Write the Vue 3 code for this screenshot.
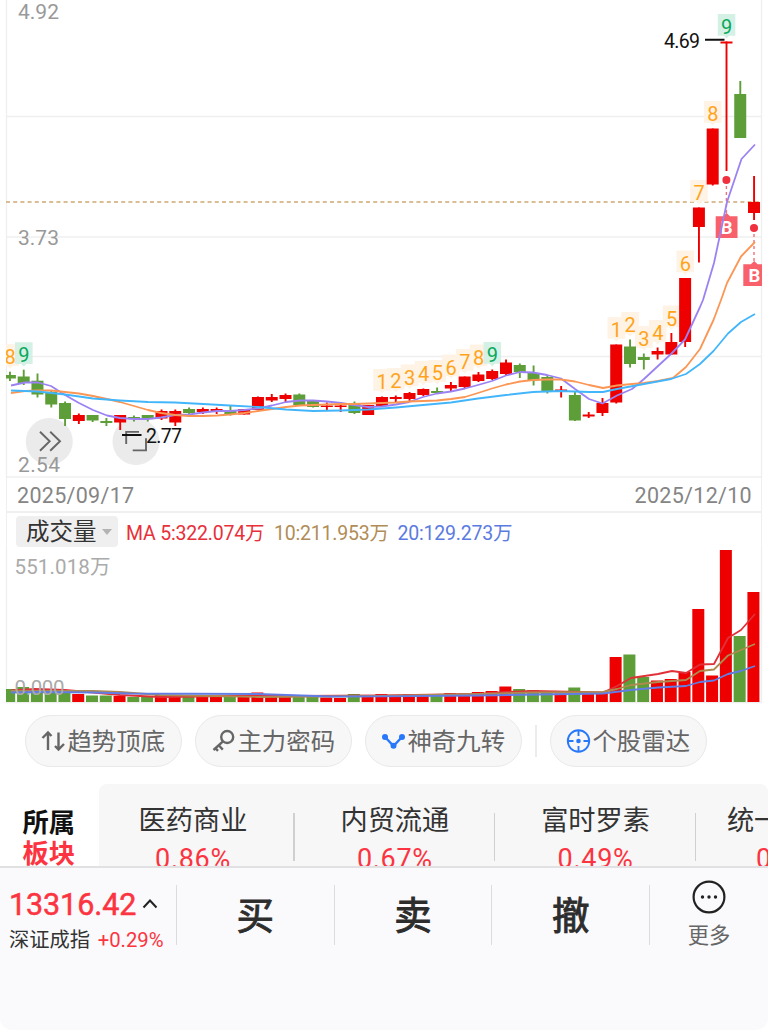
<script setup>
import { computed } from "vue"

const STEP = 13.78
const START = 9.9

// high, body top, body bottom, low, rising, volume top
const candles = [
  [371.7, 375, 378.5, 381, 0, 689],
  [369.7, 376.5, 383, 385, 0, 687],
  [373.5, 380.7, 394.5, 397.5, 0, 689],
  [391, 392, 404.5, 407.5, 0, 690],
  [401.5, 403, 419, 426, 0, 692],
  [413.5, 415, 421, 424, 1, 694],
  [415, 415, 420.5, 422, 0, 695.5],
  [418, 421, 423, 426, 0, 695.5],
  [415, 415, 422.5, 430, 1, 696],
  [415.5, 417, 419, 421.5, 0, 697],
  [415, 415, 419, 421.5, 0, 697],
  [409.5, 411, 418.5, 420, 1, 695],
  [409.5, 411, 422.5, 426, 1, 696],
  [407.5, 409, 413, 414, 0, 697],
  [407.5, 409, 412, 414, 1, 697],
  [407.5, 409, 411, 414, 1, 697],
  [405.5, 411, 414, 415.5, 0, 696],
  [409, 409, 414.5, 414.5, 1, 696],
  [396.5, 397, 410, 411, 1, 692.5],
  [394, 397, 400.5, 402, 1, 696],
  [393.5, 395, 399, 402, 1, 697],
  [393.5, 394.5, 405, 405, 0, 696],
  [401, 401, 407, 407.5, 0, 695.5],
  [402.5, 405.5, 407, 410, 1, 697.5],
  [404, 405.5, 407, 412, 1, 698],
  [401.5, 404, 413, 414, 0, 694],
  [405, 405, 415, 415, 1, 696],
  [396.5, 397, 406, 406, 1, 694],
  [395.5, 397, 399, 402, 1, 697],
  [392, 393, 399, 401, 1, 694],
  [388.5, 389, 395, 396, 1, 694],
  [387.5, 391, 393, 394, 0, 695],
  [382, 385, 388.5, 391, 1, 693],
  [376.5, 376.5, 387, 388, 1, 693.5],
  [372, 374.5, 381, 382, 1, 692],
  [369.5, 371, 379, 380, 1, 691],
  [359.5, 362.5, 374, 375, 1, 686.5],
  [363.5, 365, 372, 378, 0, 689],
  [365.5, 373, 380.5, 385.5, 0, 690],
  [376, 377, 391, 393.5, 0, 693],
  [386, 389.5, 392, 397.5, 1, 693.5],
  [391, 395, 420.5, 421, 0, 687.5],
  [412, 414.5, 416.5, 418, 1, 693.5],
  [398, 403, 413, 416, 1, 693],
  [344.5, 344.5, 402.5, 403.5, 1, 657],
  [339.5, 346.5, 364, 367.5, 0, 654.5],
  [353.5, 357, 360, 369.5, 0, 677],
  [347.5, 351, 354.5, 359.5, 1, 680.5],
  [333, 342, 354.5, 355, 1, 679],
  [278, 278, 342, 347, 1, 672],
  [207.5, 207.5, 227, 262.5, 1, 609],
  [128.5, 128.5, 184.5, 185.5, 1, 675.5],
  [41.5, 41.5, 43.5, 171, 1, 550],
  [81, 94, 138, 138, 0, 636],
  [176, 202, 213, 220, 1, 592],
]

const bars = computed(() => candles.map(([high, top, bottom, low, up, vol], i) => ({
  x: START + STEP * i, high, top, bottom, low, vol, color: up ? "#ee0000" : "#5d9e39",
})))

// Magic-nine counters: candle index -> number
const counts = [[0, 8], [1, 9]]
for (let n = 1; n <= 9; n++) {
  counts.push([26 + n, n], [43 + n, n])
}
const badges = counts
  .map(([i, n]) => ({ x: START + STEP * i, y: candles[i][0] - 27.5, n }))
  .sort((a, b) => a.n - b.n)

const priceLines = [
  { color: "#9b82f3", points: "11,385.5 18,384 25,382.5 38,382.5 51,386 65,395 79,403 93,410 107,415.5 120,418 134,419 148,419 161,417.5 175,415 189,414.5 203,412.5 217,411 230,411 244,410 258,408.5 272,405.5 286,402 300,400.5 313,400.5 327,401.5 341,403 354,405 368,407 382,406.5 396,404.5 409,402 423,397 437,393.5 451,391.5 465,388.5 478,385 492,381 506,375.5 520,372 533,372.5 547,375 561,378.5 575,389 589,399 602.5,403.5 617,395.5 632,389 644,379 658,366 671,354 685,339.5 700,307 703,300 714,263 727,202 741.5,159 755,144.5" },
  { color: "#fb9654", points: "11,393 25,391 38,390.5 51,390.5 65,392 79,393.5 93,396 107,399 120,402 134,406 148,410 161,413 175,415 189,416 203,416 217,415.5 230,414.5 244,413 258,411 272,409 286,407 300,405.5 313,405 327,404.5 341,404 354,404 368,403.5 382,403 396,402.5 409,401.5 423,401 437,400.5 451,399 465,397 478,393 492,388.5 506,384.5 520,381.5 533,380 547,379.5 561,379.5 575,381.5 589,385 603,388 617,385.5 632,384 644,383 658,381 673,378 686,367 700,349 713.5,320 721,300 727,283 741,256.5 755,242" },
  { color: "#43b6fb", points: "11,390.5 38,391.5 65,394.5 93,398.5 120,400.5 148,402 175,402.5 203,404 230,405.5 258,407 286,409.5 313,411 341,410.5 368,409.5 396,407.5 423,405 451,402.5 478,398.5 506,395 533,392 561,391 589,392 603,392 617,389 644,384 671,379 686,374 700,364 713.5,351 728,333.5 741,322 755,314" },
]

const volumeLines = [
  { color: "#e03138", points: "11,690.5 35,689 65,690 93,692.5 120,695 160,697 200,696.5 258,695.5 300,696 382,695.5 478,694 506,692 533,691 603,692.5 617,686 631,678 658,674 672,671 686,673 700,664.5 714,664 728,638 741,630 755,614" },
  { color: "#ae8a50", points: "11,691 93,691 120,692 160,695 258,697 382,696 478,694 533,692.5 603,692 617,689 631,685 658,682 686,680 700,671 714,669.5 728,655.5 755,644" },
  { color: "#617ee6", points: "11,692.5 38,692 93,692.5 130,693.5 258,694 330,696.5 382,696.3 478,695.5 603,693.5 631,690 658,687.5 686,686 700,682 714,680.5 728,674 741,671 755,666" },
]

const signals = [
  { x: 726.4, y: 180 },
  { x: 754, y: 228 },
]

const sectors = [
  { name: "医药商业", change: "0.86%" },
  { name: "内贸流通", change: "0.67%" },
  { name: "富时罗素", change: "0.49%" },
]

const actions = ["买", "卖", "撤"]
</script>

<template>
  <div class="page">
    <!-- Price chart -->
    <svg
      class="price-chart"
      viewBox="0 0 768 478"
    >
      <defs>
        <clipPath id="plot">
          <rect
            x="6"
            y="0"
            width="756"
            height="478"
          />
        </clipPath>
      </defs>
      <g class="grid">
        <path d="M6 116.5H762M6 237H762M6 356.5H762M6 477H762M6.5 0V478M761.5 0V478" />
      </g>
      <g class="float-btn">
        <circle cx="49.3" cy="441.5" r="23.5" />
        <circle cx="136" cy="441.5" r="23.5" />
        <path d="M40 431.7L49.7 441.2L40 450.7M50.2 431.7L60 441.2L50.2 450.7M126.2 444V431.9H139M132.7 450.4H146V438.3" />
      </g>
      <g class="axis">
        <text x="18" y="19" textLength="41">4.92</text>
        <text x="18" y="245" textLength="41">3.73</text>
        <text x="18" y="471.5" textLength="42">2.54</text>
      </g>
      <path
        class="last-price"
        d="M6 202H762"
      />
      <g clip-path="url(#plot)">
        <g
          v-for="b in badges"
          :key="'t' + b.x"
          :class="b.n === 9 ? 'badge nine' : 'badge'"
        >
          <path :d="`M${b.x - 8.7} ${b.y}h17.6v21.8h-6.2l-2.6 2.6l-2.6 -2.6h-6.2z`" />
        </g>
        <g
          v-for="bar in bars"
          :key="bar.x"
          :fill="bar.color"
        >
          <rect
            :x="bar.x - 0.9"
            :y="bar.high"
            width="1.9"
            :height="bar.low - bar.high"
          />
          <rect
            :x="bar.x - 6"
            :y="bar.top"
            width="12"
            :height="bar.bottom - bar.top"
          />
        </g>
        <g
          v-for="s in signals"
          :key="s.x"
          class="signal"
        >
          <circle
            :cx="s.x"
            :cy="s.y"
            r="4"
          />
          <path
            class="stem"
            :d="`M${s.x} ${s.y + 6}v29`"
          />
          <path
            class="flag"
            :d="`M${s.x - 10.7} ${s.y + 36.3}h7.5l3.4 -3.4l3.4 3.4h7.5v21.6h-21.8z`"
          />
          <text
            :x="s.x + 0.3"
            :y="s.y + 53.8"
          >B</text>
        </g>
        <polyline
          v-for="line in priceLines"
          :key="line.color"
          class="ma"
          :points="line.points"
          :stroke="line.color"
        />
        <text
          v-for="b in badges"
          :key="'n' + b.x"
          :class="b.n === 9 ? 'count green' : 'count'"
          :x="b.x + 0.2"
          :y="b.y + 20.2"
        >{{ b.n }}</text>
      </g>
      <g class="extreme">
        <path d="M705 39.8H724.5M122 435H141.5" />
        <text x="664" y="47.5" textLength="36">4.69</text>
        <text x="146" y="442.5" textLength="36">2.77</text>
      </g>
    </svg>

    <div class="dates">
      <span>2025/09/17</span>
      <span>2025/12/10</span>
    </div>

    <!-- Volume indicator -->
    <div class="volume-head">
      <div class="picker">
        成交量<i class="caret" />
      </div>
      <span class="ma5">MA 5:322.074万</span>
      <span class="ma10">10:211.953万</span>
      <span class="ma20">20:129.273万</span>
    </div>
    <svg
      class="volume-chart"
      viewBox="0 548 768 156"
    >
      <g class="grid">
        <path d="M6.5 548V703M761.5 548V703M6 702.7H762" />
      </g>
      <text
        class="vol-label"
        x="14.5"
        y="574"
        textLength="96"
      >551.018万</text>
      <rect
        v-for="(bar, i) in bars"
        :key="bar.x"
        :x="i ? bar.x - 6.6 : 6"
        :y="bar.vol"
        :width="i ? 12 : 9.2"
        :height="702 - bar.vol"
        :fill="bar.color"
      />
      <polyline
        v-for="line in volumeLines"
        :key="line.color"
        class="ma"
        :points="line.points"
        :stroke="line.color"
      />
      <text
        class="vol-label"
        x="14.5"
        y="695"
        textLength="50"
      >0.000</text>
    </svg>

    <!-- Indicator shortcuts -->
    <div class="chips">
      <div class="chip">
        <svg
          width="25"
          height="24"
          viewBox="0 0 25 24"
        >
          <path d="M7 21V3.5M1.5 9L7 3.5L10.5 7M17.5 3.5V20.5M14 17L17.5 20.5L23 15" />
        </svg><span>趋势顶底</span>
      </div>
      <div class="chip">
        <svg
          width="25"
          height="24"
          viewBox="0 0 25 24"
        >
          <circle
            cx="16.2"
            cy="8"
            r="6"
          />
          <path d="M12 12.3L2.5 21M7.7 16.2L11.8 20.6M4.4 19.1L7 21.8" />
        </svg><span>主力密码</span>
      </div>
      <div class="chip blue">
        <svg
          width="25"
          height="24"
          viewBox="0 0 25 24"
        >
          <path d="M4 8L12.5 17L21 8" />
          <g class="dots">
            <circle
              cx="4"
              cy="8"
              r="3"
            />
            <circle
              cx="12.5"
              cy="16.7"
              r="3"
            />
            <circle
              cx="21"
              cy="8"
              r="3"
            />
          </g>
        </svg><span>神奇九转</span>
      </div>
      <i class="sep" />
      <div class="chip blue">
        <svg
          class="thin"
          width="25"
          height="24"
          viewBox="0 0 25 24"
        >
          <circle
            cx="12.5"
            cy="12"
            r="10.7"
          />
          <path d="M12.5 1.5V7M12.5 17V22.5M2 12H7.5M17.5 12H23" />
          <g class="dots">
            <circle
              cx="12.5"
              cy="12"
              r="2.3"
            />
          </g>
        </svg><span>个股雷达</span>
      </div>
    </div>

    <!-- Related sectors -->
    <div class="sectors">
      <div class="sector-title">
        <span>所属</span>
        <span class="red">板块</span>
      </div>
      <div class="sector-list">
        <div
          v-for="s in sectors"
          :key="s.name"
          class="sector"
        >
          <span class="name">{{ s.name }}</span>
          <span class="change">{{ s.change }}</span>
        </div>
        <div class="sector last">
          <span class="name">统一</span>
          <span class="change">0</span>
        </div>
      </div>
    </div>

    <!-- Trade bar -->
    <div class="trade-bar">
      <div class="index">
        <div class="index-value">
          13316.42
          <svg
            width="16"
            height="12"
            viewBox="0 0 16 12"
          >
            <path d="M1.5 8.5L8 1.5L14.5 8.5" />
          </svg>
        </div>
        <div class="index-name">
          深证成指<span>+0.29%</span>
        </div>
      </div>
      <div
        v-for="a in actions"
        :key="a"
        class="action"
      >
        {{ a }}
      </div>
      <div class="more">
        <svg
          width="36"
          height="36"
          viewBox="0 0 36 36"
        >
          <circle
            class="ring"
            cx="18"
            cy="18"
            r="15.4"
          />
          <circle cx="11.5" cy="18" r="1.7" />
          <circle cx="18" cy="18" r="1.7" />
          <circle cx="24.5" cy="18" r="1.7" />
        </svg>
        更多
      </div>
    </div>
  </div>
</template>

<style>
body {
  margin: 0;
  background: #fff;
}
</style>

<style scoped>
.page {
  width: 768px;
  height: 1030px;
  display: flex;
  flex-direction: column;
  overflow: hidden;
  background: #fff;
  font-family: Roboto, "Noto Sans CJK SC", sans-serif;
}

.price-chart,
.volume-chart {
  display: block;
  width: 768px;
  flex: none;
}

.price-chart {
  height: 478px;
}

.volume-chart {
  height: 156px;
}

.grid path {
  fill: none;
  stroke: #efefef;
  stroke-width: 1.3;
}

.axis text {
  font-size: 21px;
  fill: #999;
}

.float-btn circle {
  fill: #ebebeb;
}

.float-btn path {
  fill: none;
  stroke: #666;
  stroke-width: 1.9;
}

.last-price {
  stroke: #cda873;
  stroke-width: 1.6;
  stroke-dasharray: 4 3.2;
}

.badge path {
  fill: #fff3e5;
}

.badge.nine path {
  fill: #d5f1e5;
}

.count {
  font-size: 20px;
  fill: #ffa31a;
  text-anchor: middle;
}

.count.green {
  fill: #09a85d;
}

.signal circle {
  fill: #f0303e;
}

.stem {
  stroke: #f2707a;
  stroke-width: 1.4;
  stroke-dasharray: 3 3;
}

.flag {
  fill: #f8606b;
}

.signal text {
  font-size: 18.5px;
  font-weight: 700;
  fill: #fff;
  text-anchor: middle;
}

.ma {
  fill: none;
  stroke-width: 1.8;
  stroke-linejoin: round;
}

.extreme path {
  stroke: #111;
  stroke-width: 1.9;
}

.extreme text {
  font-size: 19.5px;
  fill: #111;
}

.dates {
  flex: none;
  box-sizing: border-box;
  height: 35px;
  margin: 0 6px;
  padding: 2px 9px 0 10px;
  display: flex;
  justify-content: space-between;
  align-items: center;
  border: solid #efefef;
  border-width: 0 1px 2px;
  font-size: 21.5px;
  letter-spacing: 0.3px;
  color: #858585;
}

.volume-head {
  flex: none;
  box-sizing: border-box;
  height: 35px;
  margin: 0 6px;
  padding: 3px 0 0 9px;
  display: flex;
  align-items: flex-start;
  border: solid #efefef;
  border-width: 0 1px;
  font-size: 19.5px;
  line-height: 36px;
  letter-spacing: -0.2px;
  white-space: nowrap;
}

.picker {
  box-sizing: border-box;
  width: 102px;
  height: 31px;
  padding-left: 10px;
  margin-right: 8px;
  display: flex;
  align-items: center;
  gap: 5px;
  border-radius: 4px;
  background: #efefef;
  font-size: 23.5px;
  letter-spacing: 0;
  line-height: 30px;
  color: #333;
}

.caret {
  border: 5px solid transparent;
  border-top: 6px solid #b3b3b3;
  border-bottom: 0;
}

.ma5 {
  width: 148px;
  color: #e8303a;
}

.ma10 {
  width: 123.5px;
  color: #b08d57;
}

.ma20 {
  color: #5c7be0;
}

.vol-label {
  font-size: 20.5px;
  fill: #aaa;
}

.chips {
  flex: none;
  height: 52px;
  margin: 11px 0 0 24.5px;
  display: flex;
  align-items: center;
  gap: 12.5px;
}

.chip {
  box-sizing: border-box;
  width: 157.5px;
  height: 52px;
  display: flex;
  align-items: center;
  justify-content: center;
  gap: 1px;
  border: 1.5px solid #e9e9e9;
  border-radius: 26px;
  background: #f7f7f7;
  font-size: 24.4px;
  color: #666;
  white-space: nowrap;
}

.chip span {
  padding-bottom: 3px;
}

.chip svg {
  flex: none;
  fill: none;
  stroke: #666;
  stroke-width: 2.4;
}

.chip.blue svg {
  stroke: #2878fa;
}

.chip svg.thin {
  stroke-width: 1.9;
}

.chip .dots {
  fill: #2878fa;
  stroke: none;
}

.sep {
  width: 1.5px;
  height: 32px;
  margin: 0 0.5px;
  background: #ececec;
}

.sectors {
  flex: none;
  height: 82px;
  margin-top: 17px;
  display: flex;
  overflow: hidden;
}

.sector-title {
  box-sizing: border-box;
  width: 98.5px;
  flex: none;
  padding: 23.5px 0 0 22.5px;
  display: flex;
  flex-direction: column;
  font-size: 26.3px;
  font-weight: 700;
  line-height: 31px;
  color: #111;
}

.sector-title .red {
  color: #fc3441;
}

.sector-list {
  flex: 1;
  min-width: 0;
  display: flex;
  overflow: hidden;
  border-radius: 8px 8px 0 0;
  background: #f7f7f7;
}

.sector {
  position: relative;
  flex: none;
  width: 200.7px;
  display: flex;
  flex-direction: column;
  align-items: center;
  color: #333;
}

.sector:first-child {
  width: 196px;
}

.sector:first-child span {
  margin-left: -7px;
}

.sector:not(.first)::after {
  content: "";
  position: absolute;
  right: 0;
  top: 29px;
  width: 1.3px;
  height: 48px;
  background: #d0d0d0;
}

.sector.last {
  align-items: flex-start;
  padding-left: 31px;
}

.sector.last::after {
  display: none;
}

.name {
  margin-top: 16.5px;
  font-size: 27.2px;
  line-height: 40px;
}

.change {
  margin-top: 2.5px;
  font-size: 27px;
  line-height: 32px;
  letter-spacing: 0.7px;
  color: #fc3441;
}

.last .change {
  margin-left: 29px;
}

.trade-bar {
  flex: 1;
  box-sizing: border-box;
  display: flex;
  align-items: flex-start;
  border-top: 2px solid #e1e1e4;
  border-radius: 0 0 12px 12px;
  background: #fafafc;
}

.index {
  box-sizing: border-box;
  width: 176px;
  height: 77px;
  padding: 17px 0 0 9px;
}

.index-value {
  display: flex;
  align-items: center;
  gap: 6px;
  font-size: 30.5px;
  -webkit-text-stroke: 0.5px;
  line-height: 40px;
  letter-spacing: -0.1px;
  color: #fc3441;
}

.index-value svg {
  fill: none;
  stroke: #222;
  stroke-width: 2;
}

.index-name {
  display: flex;
  align-items: center;
  gap: 7.5px;
  font-size: 20.3px;
  line-height: 31px;
  color: #333;
  white-space: nowrap;
}

.index-name span {
  color: #fc3441;
}

.action,
.more {
  height: 60px;
  margin-top: 16.5px;
  border-left: 1.3px solid #dcdcdf;
  box-sizing: border-box;
}

.action {
  width: 157.7px;
  text-align: center;
  font-size: 37.5px;
  -webkit-text-stroke: 0.9px;
  line-height: 62px;
  color: #2d2d2d;
}

.more {
  flex: 1;
  display: flex;
  flex-direction: column;
  align-items: center;
  font-size: 21.3px;
  line-height: 30px;
  color: #666;
}

.more svg {
  flex: none;
  margin: -6px 0 6px;
  fill: #222;
}

.more .ring {
  fill: none;
  stroke: #222;
  stroke-width: 2.2;
}
</style>
